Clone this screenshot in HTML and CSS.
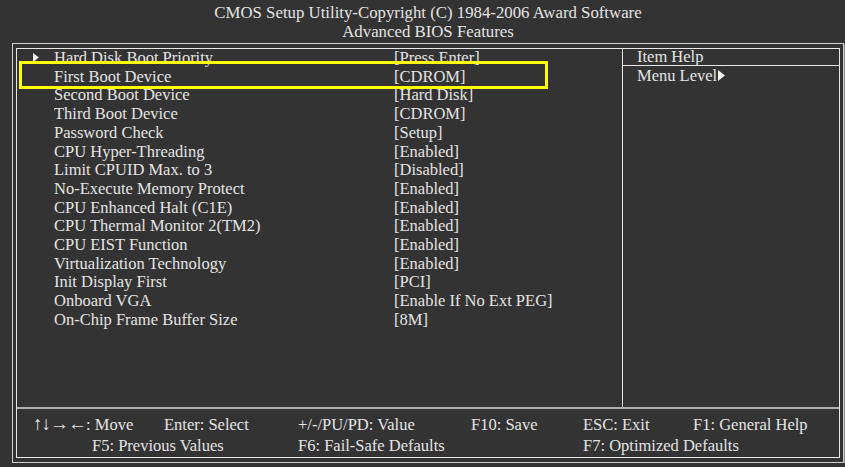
FILE: index.html
```html
<!DOCTYPE html>
<html lang="en">
<head>
    <meta charset="UTF-8">
    <title>Advanced BIOS Features</title>
    <link rel="stylesheet" href="styles.css">
</head>
<body>
    <div class="screen">
        <div class="title">
            <div>CMOS Setup Utility-Copyright (C) 1984-2006 Award Software</div>
            <div>Advanced BIOS Features</div>
        </div>

        <div class="frame">
            <div class="inner">
                <div class="main">
                    <div class="list">
                        <div class="row">
                            <span class="mark"><svg width="6" height="9" viewBox="0 0 6 9"><path d="M0 0 L6 4.5 L0 9 Z" fill="#f0f0f0"/></svg></span>
                            <span>Hard Disk Boot Priority</span><span>[Press Enter]</span>
                        </div>
                        <div class="row"><span class="mark"></span><span>First Boot Device</span><span>[CDROM]</span></div>
                        <div class="row"><span class="mark"></span><span>Second Boot Device</span><span>[Hard Disk]</span></div>
                        <div class="row"><span class="mark"></span><span>Third Boot Device</span><span>[CDROM]</span></div>
                        <div class="row"><span class="mark"></span><span>Password Check</span><span>[Setup]</span></div>
                        <div class="row"><span class="mark"></span><span>CPU Hyper-Threading</span><span>[Enabled]</span></div>
                        <div class="row"><span class="mark"></span><span>Limit CPUID Max. to 3</span><span>[Disabled]</span></div>
                        <div class="row"><span class="mark"></span><span>No-Execute Memory Protect</span><span>[Enabled]</span></div>
                        <div class="row"><span class="mark"></span><span>CPU Enhanced Halt (C1E)</span><span>[Enabled]</span></div>
                        <div class="row"><span class="mark"></span><span>CPU Thermal Monitor 2(TM2)</span><span>[Enabled]</span></div>
                        <div class="row"><span class="mark"></span><span>CPU EIST Function</span><span>[Enabled]</span></div>
                        <div class="row"><span class="mark"></span><span>Virtualization Technology</span><span>[Enabled]</span></div>
                        <div class="row"><span class="mark"></span><span>Init Display First</span><span>[PCI]</span></div>
                        <div class="row"><span class="mark"></span><span>Onboard VGA</span><span>[Enable If No Ext PEG]</span></div>
                        <div class="row"><span class="mark"></span><span>On-Chip Frame Buffer Size</span><span>[8M]</span></div>
                        <div class="highlight"></div>
                    </div>
                    <div class="help">
                        <div class="help-title">Item Help</div>
                        <div class="help-text">Menu Level<svg class="level" width="7" height="11" viewBox="0 0 7 11"><path d="M0 0 L7 5.5 L0 11 Z" fill="#f0f0f0"/></svg></div>
                    </div>
                </div>
                <div class="keys">
                    <span><span class="arrows">&#8593;&#8595;&#8594;&#8592;</span>: Move</span>
                    <span>Enter: Select</span>
                    <span>+/-/PU/PD: Value</span>
                    <span>F10: Save</span>
                    <span>ESC: Exit</span>
                    <span>F1: General Help</span>
                    <span class="k-f5">F5: Previous Values</span>
                    <span class="k-wide">F6: Fail-Safe Defaults</span>
                    <span class="k-wide">F7: Optimized Defaults</span>
                </div>
            </div>
        </div>
    </div>
</body>
</html>
```

FILE: styles.css
```css
body {
    margin: 0;
    background-color: #333333;
    color: #e4e4e4;
    font-family: "Liberation Serif", "Times New Roman", serif;
    font-size: 16.5px;
}

.screen {
    width: 832px;
    margin-left: 12px;
}

.title {
    height: 43px;
    box-sizing: border-box;
    padding-top: 4px;
    text-align: center;
    font-size: 16.8px;
    line-height: 18.7px;
}

.frame {
    height: 420px;
    box-sizing: border-box;
    border: 1px solid #cfcfcf;
    box-shadow: 1px 1px 0 #8a8a8a;
    padding: 4px 3px 4px 3px;
}

.inner {
    height: 100%;
    box-sizing: border-box;
    border: 1px solid #e8e8e8;
    display: flex;
    flex-direction: column;
}

.main {
    height: 358px;
    display: flex;
}

.list {
    position: relative;
    width: 605px;
}

.row {
    display: grid;
    grid-template-columns: 37px 340px 1fr;
    line-height: 18.7px;
    white-space: nowrap;
}

.mark {
    padding-left: 16px;
}

.mark svg {
    vertical-align: 1px;
}

.highlight {
    position: absolute;
    left: 2px;
    top: 12px;
    width: 529px;
    height: 28px;
    box-sizing: border-box;
    border: 3px solid #ffff00;
}

.help {
    flex: 1;
    border-left: 1px solid #e8e8e8;
}

.help-title {
    height: 16px;
    line-height: 16px;
    padding-left: 14px;
    border-bottom: 1px solid #e8e8e8;
}

.help-text {
    padding-left: 14px;
    line-height: 19px;
}

.level {
    margin-left: 1px;
    vertical-align: 0;
}

.keys {
    flex: 1;
    border-top: 2px solid #b0b0b0;
    padding: 7px 0 0 16px;
    display: grid;
    grid-template-columns: 131px 134px 173px 112px 110px 1fr;
    line-height: 18px;
    white-space: nowrap;
}

.arrows {
    font-size: 19px;
    line-height: 0;
    letter-spacing: -1px;
}

.k-f5 {
    grid-column: span 2;
    padding-left: 59px;
}

.k-wide {
    grid-column: span 2;
}
```
